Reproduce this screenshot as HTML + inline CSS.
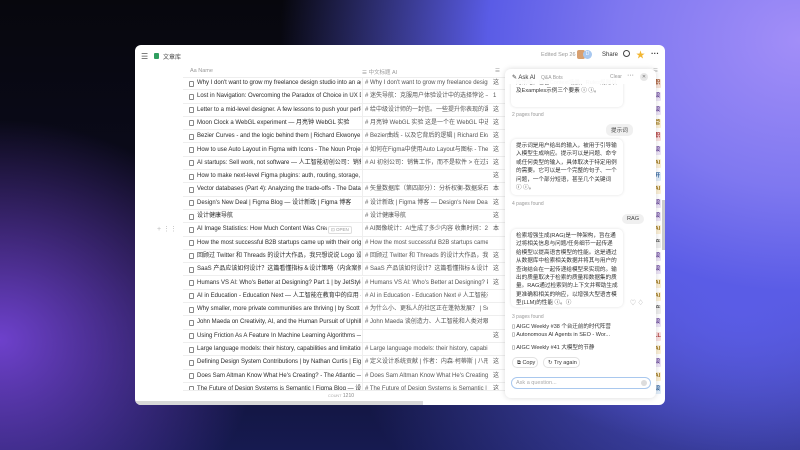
<!DOCTYPE html>
<html><head><meta charset="utf-8">
<style>
*{margin:0;padding:0;box-sizing:border-box}
body{width:800px;height:450px;overflow:hidden;position:relative;font-family:"Liberation Sans","Noto Sans CJK SC",sans-serif;
background:
radial-gradient(ellipse 260px 220px at 0px 340px, rgba(120,70,220,0.9), rgba(120,70,220,0) 100%),
radial-gradient(ellipse 520px 420px at 800px 40px, #a28ef8 0%, #7f78f0 35%, #5a5ce6 60%, rgba(60,60,200,0) 100%),
radial-gradient(ellipse 400px 300px at 740px 300px, #5b5fe8 0%, rgba(70,70,210,0) 100%),
linear-gradient(180deg,#07070d 0%,#0c0c22 60%,#161a50 100%);}
.win{position:absolute;left:135px;top:45px;width:530px;height:360px;background:#fff;border-radius:6px;overflow:hidden}
.a{position:absolute;white-space:nowrap}
.row{position:absolute;left:48px;width:362px;height:13.3px;border-bottom:1px solid #eeeeee;font-size:6px;color:#2a2a2a;line-height:13px}
.row .ic{position:absolute;left:6px;top:3.5px;width:5px;height:6px;border:0.7px solid #888;border-radius:1px}
.row .n{position:absolute;left:14px;top:0;width:164px;overflow:hidden;white-space:nowrap}
.row .c{position:absolute;left:179px;top:0;width:126px;overflow:hidden;white-space:nowrap;color:#555;border-left:1px solid #eee;padding-left:2px;height:13px}
.row .d{position:absolute;left:310px;top:0;color:#555}
.tag{position:absolute;left:519px;width:7px;height:9px;font-size:5.5px;line-height:9px;text-align:center;border-radius:1px;font-weight:bold}
.panel{position:absolute;left:370px;top:24px;width:151px;height:329px;background:#fff;border-radius:6px;box-shadow:0 0 6px rgba(0,0,0,0.15);overflow:hidden;font-size:5.6px;color:#333}
.bub{position:absolute;left:6px;width:112px;background:#fff;border-radius:5px;box-shadow:0 0 3px rgba(0,0,0,0.12);padding:3px 5px;line-height:8.4px;font-size:5.6px;white-space:normal}
.ub{position:absolute;background:#f0f0f0;border-radius:5px;font-size:5.6px;padding:2px 5px;color:#444}
.g{color:#999;font-size:5px}
</style></head><body>
<div class="win">
  <div class="a" style="left:6px;top:7px;font-size:8px;color:#555">☰</div>
  <div class="a" style="left:19px;top:8px;width:5px;height:6px;background:#2f9e5f;border-radius:1px"></div>
  <div class="a" style="left:28px;top:7px;font-size:6px;color:#444">文章库</div>
  <div class="a" style="left:406px;top:7px;font-size:5.5px;color:#999">Edited Sep 26</div>
  <div class="a" style="left:442px;top:5px;width:8px;height:9px;background:#d8a070;border-radius:2px"></div>
  <div class="a" style="left:448px;top:5px;width:9px;height:9px;background:#a8c8f0;border-radius:50%;font-size:5px;color:#fff;text-align:center;line-height:9px">D</div>
  <div class="a" style="left:467px;top:7px;font-size:6px;color:#333">Share</div>
  <div class="a" style="left:488px;top:5px;width:7px;height:7px;border:1px solid #444;border-radius:50%"></div>
  <div class="a" style="left:501px;top:3px;font-size:9px;color:#f2b632">★</div>
  <div class="a" style="left:516px;top:4px;font-size:8px;color:#333;font-weight:bold">···</div>
  <div class="a" style="left:55px;top:23px;font-size:5.5px;color:#999">Aa Name</div>
  <div class="a" style="left:227px;top:23px;font-size:5.5px;color:#999">☰ 中文标题 AI</div>
  <div class="a" style="left:360px;top:23px;font-size:5.5px;color:#999">☰</div>
  <div class="a" style="left:48px;top:32px;width:362px;height:1px;background:#eee"></div>

  <div class="row" style="top:32px"><i class="ic"></i><span class="n">Why I don't want to grow my freelance design studio into an agency</span><span class="c"># Why I don't want to grow my freelance design stud</span><span class="d">这</span></div>
  <div class="row" style="top:45.3px"><i class="ic"></i><span class="n">Lost in Navigation: Overcoming the Paradox of Choice in UX Design</span><span class="c"># 迷失导航：克服用户体验设计中的选择悖论 — Los</span><span class="d">1</span></div>
  <div class="row" style="top:58.6px"><i class="ic"></i><span class="n">Letter to a mid-level designer. A few lessons to push your performance</span><span class="c"># 给中级设计师的一封信。一些提升你表现的课程</span><span class="d">这</span></div>
  <div class="row" style="top:71.9px"><i class="ic"></i><span class="n">Moon Clock a WebGL experiment — 月亮钟 WebGL 实验</span><span class="c"># 月亮钟 WebGL 实验 这是一个在 WebGL 中进行的</span><span class="d">这</span></div>
  <div class="row" style="top:85.2px"><i class="ic"></i><span class="n">Bezier Curves - and the logic behind them | Richard Ekwonye</span><span class="c"># Bezier曲线 - 以及它背后的逻辑 | Richard Ekwonye</span><span class="d">这</span></div>
  <div class="row" style="top:98.5px"><i class="ic"></i><span class="n">How to use Auto Layout in Figma with Icons - The Noun Project</span><span class="c"># 如何在Figma中使用Auto Layout与图标 - The Noun</span><span class="d">这</span></div>
  <div class="row" style="top:111.8px"><i class="ic"></i><span class="n">AI startups: Sell work, not software — 人工智能初创公司：销售工作</span><span class="c"># AI 初创公司：销售工作，而不是软件 > 在过去的5</span><span class="d">这</span></div>
  <div class="row" style="top:125.1px"><i class="ic"></i><span class="n">How to make next-level Figma plugins: auth, routing, storage, and more</span><span class="c"></span><span class="d">这</span></div>
  <div class="row" style="top:138.4px"><i class="ic"></i><span class="n">Vector databases (Part 4): Analyzing the trade-offs - The Data Quarry</span><span class="c"># 矢量数据库（第四部分）：分析权衡-数据采石场</span><span class="d">本</span></div>
  <div class="row" style="top:151.7px"><i class="ic"></i><span class="n">Design's New Deal | Figma Blog — 设计新政 | Figma 博客</span><span class="c"># 设计新政 | Figma 博客 — Design's New Deal | Figm</span><span class="d">这</span></div>
  <div class="row" style="top:165px"><i class="ic"></i><span class="n">设计健康导航</span><span class="c"># 设计健康导航</span><span class="d">这</span></div>
  <div class="row" style="top:178.3px"><i class="ic"></i><span class="n" style="width:130px">AI Image Statistics: How Much Content Was Created by AI</span><span class="a" style="left:145px;top:3px;font-size:4.5px;line-height:6px;color:#999;border:0.6px solid #ddd;border-radius:2px;padding:0 2px">⊡ OPEN</span><span class="c"># AI图像统计：AI生成了多少内容 收集时间：2023年</span><span class="d">本</span></div>
  <div class="a" style="left:22px;top:180px;font-size:7px;color:#bbb">+ ⋮⋮</div>
  <div class="row" style="top:191.6px"><i class="ic"></i><span class="n">How the most successful B2B startups came up with their original ideas</span><span class="c"># How the most successful B2B startups came up wit</span><span class="d"></span></div>
  <div class="row" style="top:204.9px"><i class="ic"></i><span class="n">回顾过 Twitter 和 Threads 的设计大作品，我只想说说 Logo 设计</span><span class="c"># 回顾过 Twitter 和 Threads 的设计大作品，我只想</span><span class="d">这</span></div>
  <div class="row" style="top:218.2px"><i class="ic"></i><span class="n">SaaS 产品应该如何设计？这篇看懂指标＆设计策略（内含案例）</span><span class="c"># SaaS 产品该如何设计？这篇看懂指标＆设计策略</span><span class="d">这</span></div>
  <div class="row" style="top:231.5px"><i class="ic"></i><span class="n">Humans VS AI: Who's Better at Designing? Part 1 | by JetStyle | Medium</span><span class="c"># Humans VS AI: Who's Better at Designing? Part 1 |</span><span class="d">这</span></div>
  <div class="row" style="top:244.8px"><i class="ic"></i><span class="n">AI in Education - Education Next — 人工智能在教育中的应用 - Ed</span><span class="c"># AI in Education - Education Next # 人工智能在教育</span><span class="d"></span></div>
  <div class="row" style="top:258.1px"><i class="ic"></i><span class="n">Why smaller, more private communities are thriving | by Scott Walker</span><span class="c"># 为什么小、更私人的社区正在蓬勃发展？ | Scott</span><span class="d"></span></div>
  <div class="row" style="top:271.4px"><i class="ic"></i><span class="n">John Maeda on Creativity, AI, and the Human Pursuit of Uphill Tasks</span><span class="c"># John Maeda 谈创造力、人工智能和人类对艰苦任务</span><span class="d"></span></div>
  <div class="row" style="top:284.7px"><i class="ic"></i><span class="n">Using Friction As A Feature In Machine Learning Algorithms — 在机器</span><span class="c"></span><span class="d">这</span></div>
  <div class="row" style="top:298px"><i class="ic"></i><span class="n">Large language models: their history, capabilities and limitations</span><span class="c"># Large language models: their history, capabilities a</span><span class="d"></span></div>
  <div class="row" style="top:311.3px"><i class="ic"></i><span class="n">Defining Design System Contributions | by Nathan Curtis | EightShapes</span><span class="c"># 定义设计系统贡献 | 作者：内森·柯蒂斯 | 八形 | 中</span><span class="d">这</span></div>
  <div class="row" style="top:324.6px"><i class="ic"></i><span class="n">Does Sam Altman Know What He's Creating? - The Atlantic — 山姆</span><span class="c"># Does Sam Altman Know What He's Creating? - The</span><span class="d">这</span></div>
  <div class="row" style="top:337.9px;height:8px;overflow:hidden"><i class="ic"></i><span class="n">The Future of Design Systems is Semantic | Figma Blog — 设计系统</span><span class="c"># The Future of Design Systems is Semantic | Figma B</span><span class="d">这</span></div>
  <div class="a" style="left:48px;top:346px;width:362px;height:8px;background:#fff"></div>
  <div class="a" style="left:193px;top:348px;font-size:5px;color:#888"><span style="font-size:3.8px;color:#aaa">COUNT</span> 1210</div>
  <div class="a" style="left:0;top:356px;width:288px;height:4px;background:#d8d8d8"></div>

  <div class="a" style="left:518px;top:23px;font-size:5.5px;color:#aaa">☰</div>
  <div class="tag" style="top:34px;background:#f6e3d8;color:#a0522d">职</div>
  <div class="tag" style="top:47.3px;background:#ece4f6;color:#6a4a9a">设</div>
  <div class="tag" style="top:60.6px;background:#ece4f6;color:#6a4a9a">设</div>
  <div class="tag" style="top:73.9px;background:#fbf0d6;color:#a07a20">管</div>
  <div class="tag" style="top:87.2px;background:#f8e0e0;color:#b03a3a">职</div>
  <div class="tag" style="top:100.5px;background:#ece4f6;color:#6a4a9a">设</div>
  <div class="tag" style="top:113.8px;background:#fbf0d6;color:#a07a20">AI</div>
  <div class="tag" style="top:127.1px;background:#e0ecf8;color:#3a6aa0">开</div>
  <div class="tag" style="top:140.4px;background:#fbf0d6;color:#a07a20">AI</div>
  <div class="tag" style="top:153.7px;background:#ece4f6;color:#6a4a9a">设</div>
  <div class="tag" style="top:167px;background:#ece4f6;color:#6a4a9a">设</div>
  <div class="tag" style="top:180.3px;background:#fbf0d6;color:#a07a20">AI</div>
  <div class="tag" style="top:193.6px;background:#eee;color:#666">产</div>
  <div class="tag" style="top:206.9px;background:#ece4f6;color:#6a4a9a">设</div>
  <div class="tag" style="top:220.2px;background:#ece4f6;color:#6a4a9a">设</div>
  <div class="tag" style="top:233.5px;background:#fbf0d6;color:#a07a20">AI</div>
  <div class="tag" style="top:246.8px;background:#fbf0d6;color:#a07a20">AI</div>
  <div class="tag" style="top:260.1px;background:#eee;color:#666">产</div>
  <div class="tag" style="top:273.4px;background:#ece4f6;color:#6a4a9a">设</div>
  <div class="tag" style="top:286.7px;background:#f8e0e0;color:#b03a3a">LL</div>
  <div class="tag" style="top:300px;background:#fbf0d6;color:#a07a20">AI</div>
  <div class="tag" style="top:313.3px;background:#ece4f6;color:#6a4a9a">设</div>
  <div class="tag" style="top:326.6px;background:#fbf0d6;color:#a07a20">AI</div>
  <div class="tag" style="top:339.9px;background:#e0ecf8;color:#3a6aa0">设</div>
  <div class="a" style="left:527px;top:155px;width:3px;height:50px;background:#ccc"></div>

  <div class="panel">
    <div class="bub" style="top:-4px;height:42px;padding-top:14px">的策略，包含Context场景、Rules规则以及Examples示例三个要素 ⓘ ⓘ。</div>
    <div class="a" style="left:0;top:0;width:151px;height:15px;background:rgba(255,255,255,0.96)"></div>
    <div class="a" style="left:7px;top:5px;font-size:6px;color:#333">✎ Ask AI <span class="g" style="margin-left:4px">Q&amp;A Bots</span></div>
    <div class="a g" style="left:105px;top:5px">Clear</div>
    <div class="a" style="left:122px;top:3px;font-size:7px;color:#666">···</div>
    <div class="a" style="left:135px;top:4px;width:8px;height:8px;border-radius:50%;background:#e8e8e8;font-size:5px;text-align:center;line-height:8px;color:#777">✕</div>
    <div class="a g" style="left:7px;top:43px">2 pages found</div>
    <div class="ub" style="left:101px;top:55px">提示词</div>
    <div class="bub" style="top:70px;height:56px">提示词是用户给出的输入，被用于引导输入模型生成响应。提示可以是问题、命令或任何类型的输入，具体取决于特定用例的需要。它可以是一个完整的句子、一个问题，一个部分短语，甚至几个关键词 ⓘ ⓘ。</div>
    <div class="a g" style="left:7px;top:132px">4 pages found</div>
    <div class="ub" style="left:117px;top:145px">RAG</div>
    <div class="bub" style="top:160px;height:78px">检索增强生成(RAG)是一种架构，旨在通过将相关信息与问题/任务细节一起传递给模型以提高语言模型的性能。这是通过从数据库中检索相关数据并将其与用户的查询结合在一起传递给模型来实现的。输出的质量取决于检索的质量和数据集的质量。RAG通过检索到的上下文并帮助生成更准确和相关的响应，以增强大型语言模型(LLM)的性能 ⓘ。ⓘ</div>
    <div class="a" style="left:125px;top:229px;font-size:6px;color:#aaa">♡ ♢</div>
    <div class="a g" style="left:7px;top:245px">3 pages found</div>
    <div class="a" style="left:7px;top:253px;font-size:5.5px;color:#333">▯ AIGC Weekly #38 个台迁前的时代阵营</div>
    <div class="a" style="left:7px;top:263px;font-size:5.5px;color:#333">▯ Autonomous AI Agents in SEO - Wor...</div>
    <div class="a" style="left:7px;top:274px;font-size:5.5px;color:#333">▯ AIGC Weekly #41 大模型的节静</div>
    <div class="a" style="left:7px;top:288px;height:11px;width:26px;border:0.7px solid #e2e2e2;border-radius:5px;font-size:5.5px;line-height:10px;padding-left:4px">⧉ Copy</div>
    <div class="a" style="left:38px;top:288px;height:11px;width:37px;border:0.7px solid #e2e2e2;border-radius:5px;font-size:5.5px;line-height:10px;padding-left:4px">↻ Try again</div>
    <div class="a" style="left:6px;top:308px;width:140px;height:12px;border:1px solid #a9c8ee;border-radius:6px;font-size:5.5px;color:#aaa;line-height:10px;padding-left:4px">Ask a question...</div>
    <div class="a" style="left:136px;top:311px;width:6px;height:6px;border-radius:50%;background:#ddd"></div>
  </div>
</div>
</body></html>
